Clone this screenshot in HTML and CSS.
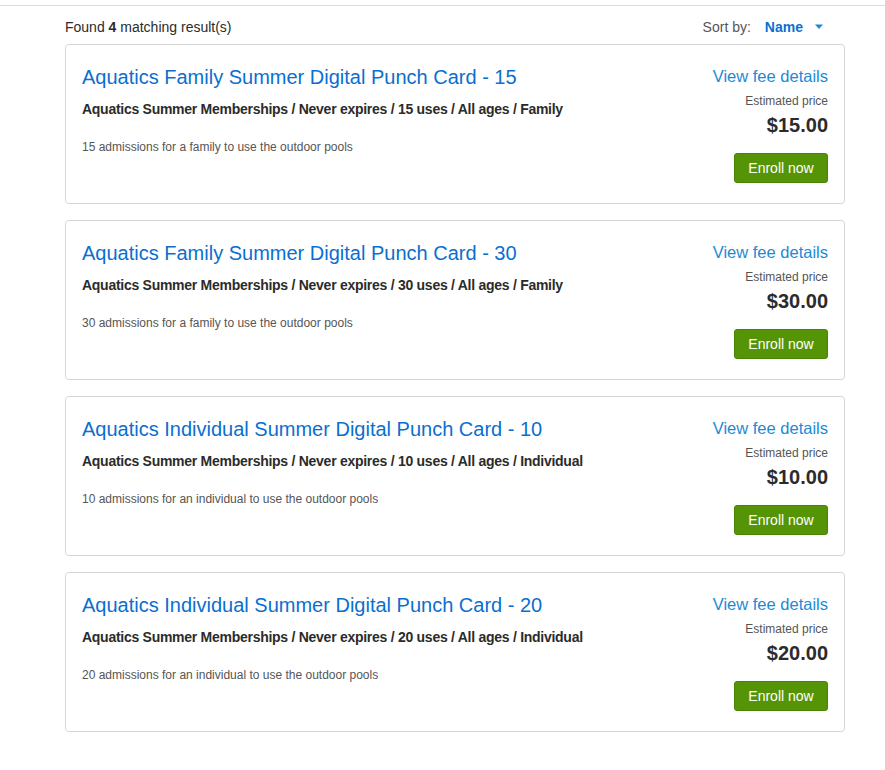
FILE: index.html
```html
<!DOCTYPE html>
<html lang="en">
<head>
<meta charset="utf-8">
<title>Results</title>
<link rel="stylesheet" href="styles.css">
</head>
<body>
<div class="page">
  <div class="results">
    <div class="results-head">
      <div class="count">Found <b>4</b> matching result(s)</div>
      <div class="sort">
        <span class="sort-label">Sort by:</span>
        <span class="sort-value">Name</span>
        <svg class="caret" width="10" height="6" viewBox="0 0 10 6"><path d="M1 0.5h8L5 5z" fill="#1a8bd4"/></svg>
      </div>
    </div>

    <div class="card">
      <div class="card-main">
        <a class="card-title">Aquatics Family Summer Digital Punch Card - 15</a>
        <div class="card-meta">Aquatics Summer Memberships / Never expires / 15 uses / All ages / Family</div>
        <div class="card-desc">15 admissions for a family to use the outdoor pools</div>
      </div>
      <div class="card-side">
        <a class="fee-link">View fee details</a>
        <div class="est">Estimated price</div>
        <div class="price">$15.00</div>
        <button class="enroll">Enroll now</button>
      </div>
    </div>

    <div class="card">
      <div class="card-main">
        <a class="card-title">Aquatics Family Summer Digital Punch Card - 30</a>
        <div class="card-meta">Aquatics Summer Memberships / Never expires / 30 uses / All ages / Family</div>
        <div class="card-desc">30 admissions for a family to use the outdoor pools</div>
      </div>
      <div class="card-side">
        <a class="fee-link">View fee details</a>
        <div class="est">Estimated price</div>
        <div class="price">$30.00</div>
        <button class="enroll">Enroll now</button>
      </div>
    </div>

    <div class="card">
      <div class="card-main">
        <a class="card-title">Aquatics Individual Summer Digital Punch Card - 10</a>
        <div class="card-meta">Aquatics Summer Memberships / Never expires / 10 uses / All ages / Individual</div>
        <div class="card-desc">10 admissions for an individual to use the outdoor pools</div>
      </div>
      <div class="card-side">
        <a class="fee-link">View fee details</a>
        <div class="est">Estimated price</div>
        <div class="price">$10.00</div>
        <button class="enroll">Enroll now</button>
      </div>
    </div>

    <div class="card">
      <div class="card-main">
        <a class="card-title">Aquatics Individual Summer Digital Punch Card - 20</a>
        <div class="card-meta">Aquatics Summer Memberships / Never expires / 20 uses / All ages / Individual</div>
        <div class="card-desc">20 admissions for an individual to use the outdoor pools</div>
      </div>
      <div class="card-side">
        <a class="fee-link">View fee details</a>
        <div class="est">Estimated price</div>
        <div class="price">$20.00</div>
        <button class="enroll">Enroll now</button>
      </div>
    </div>
  </div>
</div>
</body>
</html>
```
FILE: styles.css
```css
html, body {
  margin: 0;
  padding: 0;
  background: #fff;
}
body {
  font-family: "Liberation Sans", Arial, sans-serif;
  color: #2b2b2b;
}
.page {
  margin-top: 5px;
  border-top: 1px solid #dcdcdc;
}
.results {
  width: 780px;
  margin-left: 65px;
  display: flex;
  flex-direction: column;
  gap: 16px;
}
.results-head {
  box-sizing: border-box;
  height: 38px;
  padding-top: 4px;
  display: flex;
  align-items: center;
  justify-content: space-between;
  margin-bottom: -16px;
  font-size: 14px;
}
.count {
  color: #2b2b2b;
}
.count b {
  font-weight: bold;
}
.sort {
  display: flex;
  align-items: center;
  padding-right: 21px;
}
.sort-label {
  color: #555;
}
.sort-value {
  color: #0a6fd0;
  font-weight: bold;
  margin-left: 14px;
}
.caret {
  margin-left: 11px;
}
.card {
  box-sizing: border-box;
  height: 160px;
  border: 1px solid #d6d6d6;
  border-radius: 4px;
  padding: 20px 16px 0 16px;
  display: flex;
  justify-content: space-between;
}
.card-main {
  display: flex;
  flex-direction: column;
}
.card-title {
  font-size: 20px;
  line-height: 24px;
  color: #0a6fd0;
}
.card-meta {
  margin-top: 11px;
  font-size: 14px;
  line-height: 18px;
  font-weight: bold;
  letter-spacing: -0.27px;
  color: #2b2b2b;
}
.card-desc {
  margin-top: 22px;
  font-size: 12px;
  line-height: 14px;
  color: #555;
}
.card-side {
  display: flex;
  flex-direction: column;
  align-items: flex-end;
}
.fee-link {
  margin-top: 1px;
  font-size: 16.5px;
  line-height: 20px;
  color: #1a8bd4;
}
.est {
  margin-top: 8px;
  font-size: 12px;
  line-height: 14px;
  color: #555;
}
.price {
  margin-top: 5px;
  font-size: 20px;
  line-height: 24px;
  font-weight: bold;
  color: #2b2b2b;
}
.enroll {
  margin-top: 16px;
  width: 94px;
  height: 30px;
  border: 1px solid #4a8205;
  border-radius: 3px;
  background: #559406;
  color: #fff;
  font-family: inherit;
  font-size: 14px;
  padding: 0;
}
```
